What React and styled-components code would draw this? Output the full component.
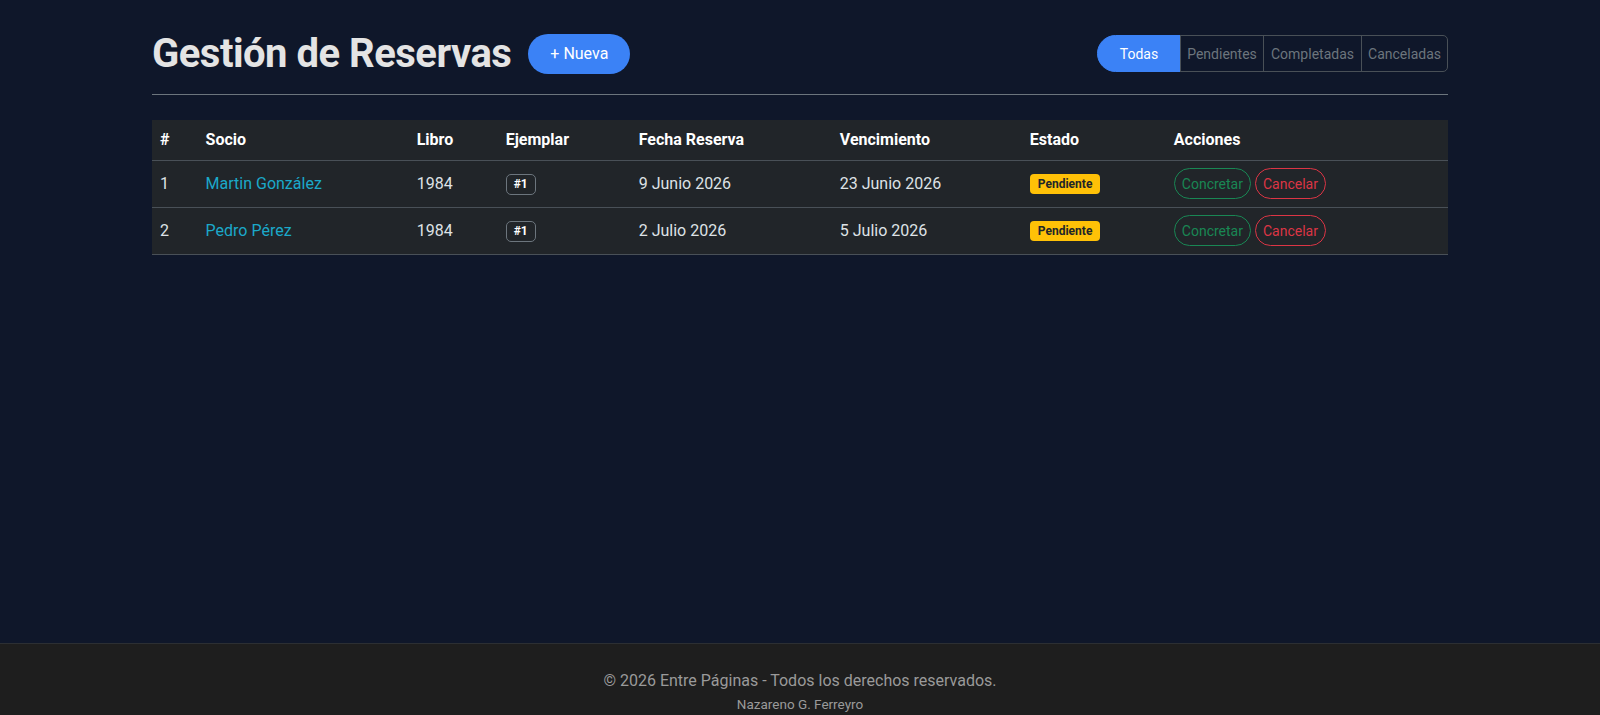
import styled, { createGlobalStyle } from 'styled-components';

const GlobalStyle = createGlobalStyle`
    * { box-sizing: border-box; }
    body {
        margin: 0;
        background: #0f172a;
        color: #dee2e6;
        font-family: Roboto, "Liberation Sans", sans-serif;
    }
`;

const Page = styled.div`
    display: flex;
    flex-direction: column;
    min-height: 100vh;
`;

const Main = styled.main`
    min-height: 643px;
`;

const Container = styled.div`
    max-width: 1320px;
    margin: 0 auto;
    padding: 30px 12px 0;
`;

const Header = styled.div`
    display: flex;
    align-items: center;
    justify-content: space-between;
    padding-bottom: 17px;
    border-bottom: 1px solid #6c757d;
    margin-bottom: 25px;
`;

const TitleGroup = styled.div`
    display: flex;
    align-items: center;
    gap: 16px;
`;

const Title = styled.h1`
    margin: 0;
    font-size: 40px;
    font-weight: 700;
    letter-spacing: -0.5px;
    color: #e4e4e4;
`;

const NewButton = styled.button`
    height: 40px;
    width: 102px;
    margin-left: 1px;
    border: none;
    border-radius: 20px;
    background: #3b82f6;
    color: #fff;
    font-family: inherit;
    font-size: 16px;
    cursor: pointer;
`;

const FilterGroup = styled.div`
    display: flex;
    height: 37px;
`;

const FilterButton = styled.button`
    width: ${(p) => p.$w}px;
    border: 1px solid ${(p) => (p.$active ? '#3b82f6' : '#495057')};
    margin-left: -1px;
    background: ${(p) => (p.$active ? '#3b82f6' : 'transparent')};
    color: ${(p) => (p.$active ? '#fff' : '#6c757d')};
    font-family: inherit;
    font-size: 14px;
    padding: 0;
    &:first-child {
        border-radius: 19px 0 0 19px;
        margin-left: 0;
    }
    &:last-child {
        border-radius: 0 5px 5px 0;
    }
`;

const Table = styled.table`
    width: 100%;
    border-collapse: collapse;
    table-layout: fixed;
    background: #212529;
    font-size: 16px;
`;

const Th = styled.th`
    text-align: left;
    font-weight: 700;
    color: #fff;
    height: 40px;
    padding: 0 8px;
    border-bottom: 1px solid #495057;
`;

const Td = styled.td`
    height: 47px;
    padding: 0 8px;
    color: #dee2e6;
    border-bottom: 1px solid #495057;
`;

const SocioLink = styled.a`
    color: #1ba9c9;
    text-decoration: none;
`;

const CopyBadge = styled.span`
    display: inline-block;
    padding: 3px 7px;
    border: 1px solid #6c757d;
    border-radius: 5px;
    font-size: 12px;
    font-weight: 700;
    color: #fff;
    line-height: 13px;
`;

const StatusBadge = styled.span`
    display: inline-block;
    padding: 4px 8px;
    border-radius: 4px;
    background: #ffc107;
    color: #212529;
    font-size: 12px;
    font-weight: 700;
    line-height: 12px;
`;

const Actions = styled.div`
    display: flex;
    gap: 4px;
`;

const ActionButton = styled.button`
    height: 31px;
    padding: 0 7px;
    border: 1px solid ${(p) => p.$color};
    border-radius: 16px;
    background: transparent;
    color: ${(p) => p.$color};
    font-family: inherit;
    font-size: 14px;
`;

const Footer = styled.footer`
    background: #1e1e1e;
    border-top: 1px solid #2c2f33;
    padding: 27px 0 20px;
    text-align: center;
`;

const Copyright = styled.p`
    margin: 0 0 6px;
    font-size: 16px;
    color: #9a9a9a;
`;

const Author = styled.p`
    margin: 0;
    font-size: 13.5px;
    color: #9a9a9a;
`;

const columns = [
    { label: '#', width: 45.6 },
    { label: 'Socio', width: 211 },
    { label: 'Libro', width: 89 },
    { label: 'Ejemplar', width: 133 },
    { label: 'Fecha Reserva', width: 201 },
    { label: 'Vencimiento', width: 190 },
    { label: 'Estado', width: 144 },
    { label: 'Acciones', width: 282 },
];

const reservas = [
    { id: 1, socio: 'Martin González', libro: '1984', ejemplar: 1, fecha: '9 Junio 2026', vence: '23 Junio 2026' },
    { id: 2, socio: 'Pedro Pérez', libro: '1984', ejemplar: 1, fecha: '2 Julio 2026', vence: '5 Julio 2026' },
];

const filters = [
    { label: 'Todas', w: 84 },
    { label: 'Pendientes', w: 84 },
    { label: 'Completadas', w: 99 },
    { label: 'Canceladas', w: 87 },
];

export default function App() {
    return (
        <Page>
            <GlobalStyle />
            <Main>
                <Container>
                    <Header>
                        <TitleGroup>
                            <Title>Gestión de Reservas</Title>
                            <NewButton>+ Nueva</NewButton>
                        </TitleGroup>
                        <FilterGroup>
                            {filters.map((f, i) => (
                                <FilterButton key={f.label} $w={f.w} $active={i === 0}>
                                    {f.label}
                                </FilterButton>
                            ))}
                        </FilterGroup>
                    </Header>

                    <Table>
                        <colgroup>
                            {columns.map((c) => (
                                <col key={c.label} style={{ width: c.width }} />
                            ))}
                        </colgroup>
                        <thead>
                            <tr>
                                {columns.map((c) => (
                                    <Th key={c.label}>{c.label}</Th>
                                ))}
                            </tr>
                        </thead>
                        <tbody>
                            {reservas.map((r) => (
                                <tr key={r.id}>
                                    <Td>{r.id}</Td>
                                    <Td><SocioLink href="#">{r.socio}</SocioLink></Td>
                                    <Td>{r.libro}</Td>
                                    <Td><CopyBadge>#{r.ejemplar}</CopyBadge></Td>
                                    <Td>{r.fecha}</Td>
                                    <Td>{r.vence}</Td>
                                    <Td><StatusBadge>Pendiente</StatusBadge></Td>
                                    <Td>
                                        <Actions>
                                            <ActionButton $color="#198754">Concretar</ActionButton>
                                            <ActionButton $color="#dc3545">Cancelar</ActionButton>
                                        </Actions>
                                    </Td>
                                </tr>
                            ))}
                        </tbody>
                    </Table>
                </Container>
            </Main>
            <Footer>
                <Copyright>© 2026 Entre Páginas - Todos los derechos reservados.</Copyright>
                <Author>Nazareno G. Ferreyro</Author>
            </Footer>
        </Page>
    );
}
